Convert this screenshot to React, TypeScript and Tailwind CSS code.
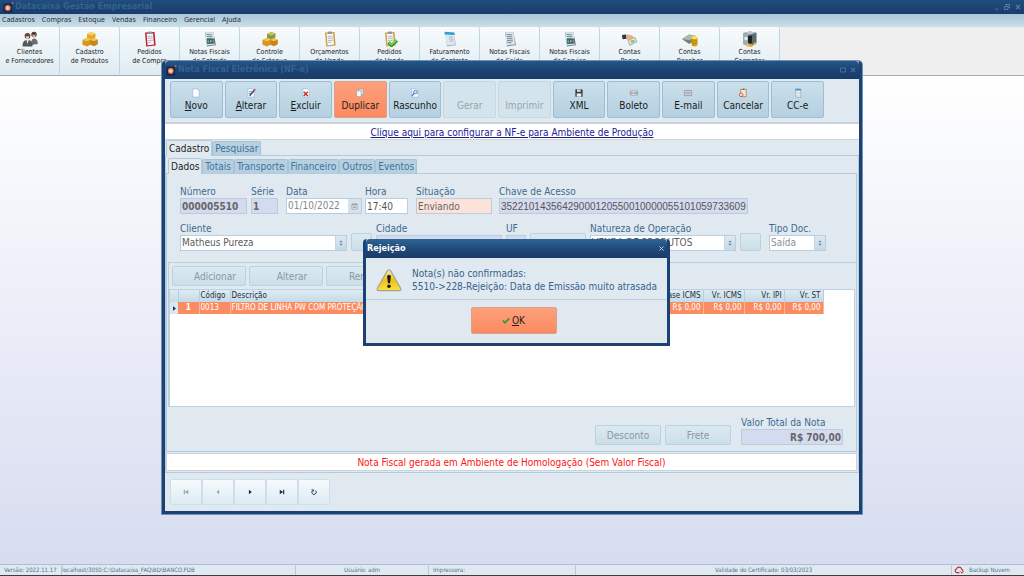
import React from "react";
import type { ReactNode } from "react";

const fontTahoma = "font-['Tahoma','DejaVu_Sans_Condensed','Noto_Sans',sans-serif]";

function AppLogo() {
  return (
    <svg viewBox="0 0 12 12" className="size-[11px] shrink-0" aria-hidden="true">
      <rect x="0.5" y="1.5" width="9.500" height="10" rx="1" fill="#17284a" />
      <circle cx="5.200" cy="6.500" r="3.100" fill="#f0824f" />
      <path d="M5.200 4.500v4M3.200 6.500h4" stroke="#fbe3d2" strokeWidth="1.200" />
      <circle cx="10.400" cy="1.400" r="1" fill="#e0703f" />
    </svg>
  );
}

function People() {
  return (
    <>
      <circle cx="12" cy="3.500" r="2.700" fill="#4a3a34" />
      <path d="M10.400 3.600c1 .5 2.400.4 3.200-.3 0 2-.6 3.200-1.600 3.200S10.400 5.500 10.400 3.600z" fill="#e8b896" />
      <path d="M9 14c0-4 .8-6.200 3-6.500 2.500 0 3.800 2 3.800 5.500z" fill="#6a6f75" />
      <circle cx="5.500" cy="5" r="2.900" fill="#5d4538" />
      <path d="M3.700 5c1.200.700 2.600.500 3.500-.200 0 2.400-.6 3.800-1.700 3.800S3.700 7.300 3.700 5z" fill="#f0c3a2" />
      <path d="M.5 15.500C.5 11 2 9 5.500 9s5 2 5 6.500z" fill="#53585e" />
      <path d="M4.500 9l1 4 1.200-4z" fill="#f5f5f5" />
    </>
  );
}

function Boxes({ green = false }: { green?: boolean }) {
  return (
    <>
      <path d="M5 3l4-2 4.500 1.500v4L9.500 8.500 5 7z" fill={green ? "#8c9a3a" : "#e3a829"} />
      <path d="M5 3l4-2 4.500 1.500L9.500 4.500z" fill={green ? "#c0c56a" : "#f8d56c"} />
      <path d="M.5 9l4-2 4.500 1.500v5l-4 2-4.500-1.700z" fill="#d9961c" />
      <path d="M.5 9l4-2L9 8.500 5 10.300z" fill="#f3c557" />
      <path d="M8.500 9l3.500-1.700L15.800 8.800v4.500L12 15.200 8.500 13.800z" fill="#c9851a" />
      <path d="M8.500 9l3.500-1.700L15.800 8.800 12 10.300z" fill="#f3c557" />
    </>
  );
}

function Clip({ tone, check = false }: { tone: "red" | "gold"; check?: boolean }) {
  return (
    <>
      <path d="M3 1.500l9.500-.5 1.200 13.500-9.500 1z" fill={tone === "red" ? "#c2202f" : "#d2a04a"} />
      <path d="M4.600 2.800l6.400-.4 1 11-6.400.8z" fill="#f7f9fb" />
      <path d="M6 .6h4v2.200H6z" fill="#8d949c" />
      <path d="M5.600 5.500l5-.3M5.800 7.500l5-.3M6 9.500l5-.3M6.200 11.500l3-.2" stroke="#9fa8b0" strokeWidth=".8" />
      {check && <path d="M6.500 11.500l3 3 5.500-5" fill="none" stroke="#2f9a1d" strokeWidth="3.200" />}
      {check && <path d="M7 11.500l2.500 2.300 5-4.500" fill="none" stroke="#8be056" strokeWidth="1.200" />}
    </>
  );
}

function Report({ chart = false, blue = false }: { chart?: boolean; blue?: boolean }) {
  return (
    <>
      <path d="M3 1l8.500.6 2.500 12.700-9 1.200z" fill={blue ? "#aeb8c0" : "#7f929e"} />
      <path d="M3.400 1l8.100.6 1.500 11.800-8.300.8z" fill="#dde7ed" />
      {blue ? (
        <>
          <path d="M2.500.8l10 .7.3 2.500-10-.4z" fill="#2f9fdc" />
          <path d="M7 6l4 .3M7.200 8l4 .3M7.400 10l4 .3" stroke="#a2adb6" strokeWidth=".8" />
        </>
      ) : (
        <path d="M4.500 3.500l5.500.4M4.700 5.500l5.600.4M5 7.500l5.600.4M5.200 9.500l5.600.4M5.400 11.500l4 .3" stroke="#6b8790" strokeWidth="1" />
      )}
      {chart && (
        <>
          <path d="M4.500 8l8-.5.5 5-8 .5z" fill="#3e6470" />
          <path d="M5.500 11.500v-2h1.500v2zM8 11.300V9h1.500v2.300z" fill="#5ed07c" />
          <path d="M10.500 11.300v-2H12v2z" fill="#e26b5b" />
        </>
      )}
    </>
  );
}

function PayHand() {
  return (
    <>
      <path d="M5 8l8-2 2.500 5-8 4z" fill="#a9bda0" />
      <path d="M6.500 9l6-1.600 1.500 3-6 2.800z" fill="#e3ecdd" />
      <path d="M8.500 10l3.500-1 .8 1.600-3.300 1.200z" fill="#8ea886" />
      <path d="M0 4l4-.5.8 4.200-4.300.6z" fill="#3a3234" />
      <path d="M4 3.800c3-.6 6 .2 8 2.400l-1 1.400-3-.5 1.800 2.200-1.300.7L4.600 7.600z" fill="#eab08a" />
    </>
  );
}

function MoneyRoll() {
  return (
    <>
      <path d="M0 8l7-4.500 7 1.500v4l-7 4z" fill="#6f8672" />
      <path d="M0 8l7-4.500 7 1.500-6.500 4.200z" fill="#a9bba6" />
      <path d="M9.500 6.500v7c0 2.500 6 2.500 6 0v-7z" fill="#d99e16" />
      <ellipse cx="12.500" cy="6.500" rx="3" ry="1.500" fill="#ffe06b" />
      <path d="M9.500 9c.5 1.500 5.500 1.500 6 0M9.500 11.500c.5 1.500 5.500 1.500 6 0" fill="none" stroke="#a8740c" strokeWidth=".7" />
    </>
  );
}

function Safe() {
  return (
    <>
      <path d="M1.500 2L8 .5l6.500 1.300v10.500L8 15.500l-6.500-2.300z" fill="#5d6a70" />
      <path d="M1.500 2L8 .5l6.500 1.300L8 3.600z" fill="#bfcace" />
      <path d="M1.500 2L8 3.600v11.900l-6.500-2.300z" fill="#9fadb3" />
      <path d="M6 4.500l4 .3v7.500l-4 .5z" fill="#1c2428" />
      <circle cx="4" cy="7.500" r="1.800" fill="#e6ecee" />
      <circle cx="5.500" cy="14" r="1.700" fill="#efbf33" />
      <circle cx="9.500" cy="14.300" r="1.500" fill="#e0a51e" />
      <circle cx="13" cy="12.800" r="1.300" fill="#efbf33" />
    </>
  );
}

type Tool = { top: string; bottom: string; icon: ReactNode };

const tools: Tool[] = [
  { top: "Clientes", bottom: "e Fornecedores", icon: <People /> },
  { top: "Cadastro", bottom: "de Produtos", icon: <Boxes /> },
  { top: "Pedidos", bottom: "de Compra", icon: <Clip tone="red" /> },
  { top: "Notas Fiscais", bottom: "de Entrada", icon: <Report chart /> },
  { top: "Controle", bottom: "de Estoque", icon: <Boxes green /> },
  { top: "Orçamentos", bottom: "de Venda", icon: <Clip tone="gold" /> },
  { top: "Pedidos", bottom: "de Venda", icon: <Clip tone="gold" check /> },
  { top: "Faturamento", bottom: "de Contrato", icon: <Report blue /> },
  { top: "Notas Fiscais", bottom: "de Saída", icon: <Report /> },
  { top: "Notas Fiscais", bottom: "de Serviço", icon: <Report chart /> },
  { top: "Contas", bottom: "Pagar", icon: <PayHand /> },
  { top: "Contas", bottom: "Receber", icon: <MoneyRoll /> },
  { top: "Contas", bottom: "Correntes", icon: <Safe /> },
];

const menu = ["Cadastros", "Compras", "Estoque", "Vendas", "Financeiro", "Gerencial", "Ajuda"];

const pageShape = <path d="M2 .8h5l2 2V10H2z" fill="#fbfdff" stroke="#8fb4de" strokeWidth=".7" />;

type Action = { name: string; key?: boolean; disabled?: boolean; active?: boolean; icon?: ReactNode };

const actions: Action[] = [
  {
    name: "Novo",
    key: true,
    icon: (
      <>
        {pageShape}
        <path d="M7 .8v2h2z" fill="#a9cdf2" />
      </>
    ),
  },
  {
    name: "Alterar",
    key: true,
    icon: (
      <>
        {pageShape}
        <path d="M3 4h4M3 6h3" stroke="#5a7fb8" strokeWidth=".8" />
        <path d="M4 8.500L9.500 2" stroke="#38446a" strokeWidth="1.600" />
        <path d="M8.700 3L10.200 1.200" stroke="#e05a3a" strokeWidth="1.800" />
      </>
    ),
  },
  {
    name: "Excluir",
    key: true,
    icon: (
      <>
        {pageShape}
        <path d="M3 4.200l4.500 4.500M7.500 4.200L3 8.700" stroke="#cc2a2a" strokeWidth="1.600" />
      </>
    ),
  },
  {
    name: "Duplicar",
    active: true,
    icon: (
      <>
        <path d="M4 1h5v6.500H4z" fill="#dfe9ee" stroke="#8aa0a8" strokeWidth=".7" />
        <path d="M1.800 3h5v6.500h-5z" fill="#f6fafb" stroke="#8aa0a8" strokeWidth=".7" />
      </>
    ),
  },
  {
    name: "Rascunho",
    icon: (
      <>
        {pageShape}
        <circle cx="6" cy="4.500" r="2" fill="#cfe6ff" stroke="#3d6cb8" strokeWidth=".9" />
        <path d="M4.500 6L2 9" stroke="#3d6cb8" strokeWidth="1.300" />
      </>
    ),
  },
  { name: "Gerar", disabled: true },
  { name: "Imprimir", disabled: true },
  {
    name: "XML",
    icon: (
      <>
        <path d="M1.500 1.500h7l1 1v7h-8z" fill="#3c4148" />
        <path d="M3.300 1.500h4v2.700h-4z" fill="#d5dbe0" />
        <path d="M3 6h5v3.500H3z" fill="#eef1f3" />
      </>
    ),
  },
  {
    name: "Boleto",
    icon: (
      <>
        <path d="M1.500 3.200h8v4.600h-8z" fill="#f2f2f2" stroke="#8b9298" strokeWidth=".8" />
        <path d="M2.800 4.500v2M4.200 4.500v2M5.800 4.500v2M7.200 4.500v2M8.400 4.500v2" stroke="#5b6268" strokeWidth=".7" />
      </>
    ),
  },
  {
    name: "E-mail",
    icon: (
      <>
        <path d="M1.500 2.800h8v5.600h-8z" fill="#d5dade" stroke="#8b9298" strokeWidth=".8" />
        <path d="M2.500 4.800h6M2.500 6.500h6" fill="none" stroke="#8f979d" strokeWidth=".8" />
      </>
    ),
  },
  {
    name: "Cancelar",
    icon: (
      <>
        <path d="M3 1.500h6v8H3z" fill="#f4ead0" stroke="#a8874a" strokeWidth=".9" />
        <path d="M5 .7h2v1.500H5z" fill="#6b6f74" />
        <circle cx="3.500" cy="7.500" r="2" fill="#f7dada" stroke="#cf4a3a" strokeWidth=".9" />
      </>
    ),
  },
  {
    name: "CC-e",
    icon: (
      <>
        <path d="M3 1.200h5.500V10H3z" fill="#f7fafc" stroke="#8c9aa5" strokeWidth=".7" />
        <path d="M2.700.9h6v1.900h-6z" fill="#3a9bd6" />
        <path d="M4 4.500h3.500M4 6.200h3.500M4 8h3.500" stroke="#a3afb8" strokeWidth=".6" />
      </>
    ),
  },
];

function Field({ id, label, className, children }: { id: string; label: string; className: string; children: ReactNode }) {
  return (
    <div className={`flex flex-col ${className}`}>
      <label htmlFor={id} className="h-3 text-[10px] leading-[12px] whitespace-nowrap text-[#3d6990]">
        {label}
      </label>
      {children}
    </div>
  );
}

const box = "h-4 w-full min-w-0 border border-[#b9cce0] px-px leading-[14px] outline-none";

function Combo({ id, value, muted = false }: { id: string; value: string; muted?: boolean }) {
  return (
    <div className="flex h-4 border border-[#b9cce0] bg-white">
      <select
        id={id}
        defaultValue={value}
        className={
          muted
            ? "min-w-0 flex-1 appearance-none bg-white pl-px text-[10px] leading-[14px] text-[#909090] outline-none"
            : "min-w-0 flex-1 appearance-none bg-white pl-px text-[10px] leading-[14px] text-[#5c5c5c] outline-none"
        }
      >
        <option>{value}</option>
      </select>
      <span className="flex w-[11px] items-center justify-center border-l border-[#c3d6e4] bg-linear-to-b from-[#dce8f0] to-[#c4d9e7]">
        <svg viewBox="0 0 5 8" className="h-[6px] w-1" aria-hidden="true">
          <path d="M2.500 .5L4.500 3H.5zM2.500 7.500L4.500 5H.5z" fill="#5b7d9f" />
        </svg>
      </span>
    </div>
  );
}

const softButton = "rounded-xs border border-[#b9d3e0] bg-linear-to-b from-[#dbe9f1] to-[#cbdfe9]";

function Tab({ name, active = false }: { name: string; active?: boolean }) {
  return (
    <button
      type="button"
      role="tab"
      aria-selected={active}
      className={
        active
          ? "-mb-px h-4 rounded-t-xs border border-b-0 border-[#b3cbdd] bg-[#e2eaf1] px-[2px] text-[10px] leading-[14px] text-[#222]"
          : "h-[14px] rounded-t-xs border border-b-0 border-[#a5c4d9] bg-[#b6d0e1] px-[2px] text-[10px] leading-[13px] text-[#44739b]"
      }
    >
      {name}
    </button>
  );
}

function RecordButton({ name, disabled = false, children }: { name: string; disabled?: boolean; children: ReactNode }) {
  return (
    <button
      type="button"
      aria-label={name}
      disabled={disabled}
      className="flex h-[26px] w-8 items-center justify-center rounded-xs border border-[#cfdfe9] bg-linear-to-b from-[#f7fafc] to-[#dcebf3]"
    >
      <svg viewBox="0 0 8 8" className={disabled ? "size-[6px] opacity-40" : "size-[6px]"} fill="#12305c" aria-hidden="true">
        {children}
      </svg>
    </button>
  );
}

function Invoice() {
  const money = ["Base ICMS", "Vr. ICMS", "Vr. IPI", "Vr. ST"];
  return (
    <section className="absolute top-[61px] left-[162px] w-[700px] rounded-t-sm border-[3px] border-t-0 border-[#1b4272] bg-[#e1e9f0] shadow-[0_0_0_1px_#7391b5]">
      <header className="flex h-[18px] items-center justify-between rounded-t-sm bg-linear-to-b from-[#24578a] via-[#1c4374] to-[#1a3b69] px-px">
        <div className="flex items-center gap-px">
          <AppLogo />
          <h2 className="text-[9px] font-bold text-[#356191]">Nota Fiscal Eletrônica (NF-e)</h2>
        </div>
        <div className="flex gap-1 pr-[2px] text-[#476d9b]">
          <button type="button" aria-label="Maximizar">
            <svg viewBox="0 0 6 6" className="size-[6px]" fill="none" stroke="currentColor"><path d="M.5 1h5v4h-5z" /></svg>
          </button>
          <button type="button" aria-label="Fechar nota">
            <svg viewBox="0 0 6 6" className="size-[6px]" fill="none" stroke="currentColor"><path d="M1 1l4 4M5 1L1 5" strokeWidth="1.200" /></svg>
          </button>
        </div>
      </header>

      <div className="border-b border-[#c3d5e2] pt-[2px] pb-1 pl-[5px]">
        <div className="flex w-[654px] gap-[2px]">
          {actions.map((a) => (
            <button
              key={a.name}
              type="button"
              disabled={a.disabled}
              className={
                a.disabled
                  ? "flex h-[37px] flex-1 basis-0 flex-col items-center justify-end rounded-xs border border-[#c2d8e4] bg-[#d3e4ed] pb-[5px] text-[10px] leading-[13px] text-[#9aa4ab]"
                  : a.active
                    ? "flex h-[37px] flex-1 basis-0 flex-col items-center justify-end rounded-xs border border-[#d5a291] bg-linear-to-b from-[#fda07c] to-[#fb8a60] pb-[5px] text-[10px] leading-[13px] text-[#222]"
                    : "flex h-[37px] flex-1 basis-0 flex-col items-center justify-end rounded-xs border border-[#9dbfd3] bg-linear-to-b from-[#cbdfeb] to-[#b4d0e0] pb-[5px] text-[10px] leading-[13px] text-[#1a1a1a]"
              }
            >
              {a.icon && (
                <svg viewBox="0 0 11 11" className="mb-px size-[10px]" aria-hidden="true">
                  {a.icon}
                </svg>
              )}
              {a.key ? (
                <span>
                  <span className="underline">{a.name.charAt(0)}</span>
                  {a.name.slice(1)}
                </span>
              ) : (
                <span>{a.name}</span>
              )}
            </button>
          ))}
        </div>
      </div>

      <div className="flex h-[17px] items-end justify-center border-y border-[#d0d3d8] bg-white">
        <a href="#producao" className="text-[10px] leading-[13px] text-[#1b1b8f] underline">
          Clique aqui para configurar a NF-e para Ambiente de Produção
        </a>
      </div>

      <div role="tablist" className="flex h-[15px] items-end pl-px">
        <Tab name="Cadastro" active />
        <Tab name="Pesquisar" />
      </div>
      <div className="border border-[#b3cbdd] pt-px pr-px">
        <div role="tablist" className="flex h-4 items-end pl-[2px]">
          <Tab name="Dados" active />
          <Tab name="Totais" />
          <Tab name="Transporte" />
          <Tab name="Financeiro" />
          <Tab name="Outros" />
          <Tab name="Eventos" />
        </div>
        <div className="border border-[#b3cbdd]">
          <div className="flex pt-3 pl-[13px]">
            <Field id="numero" label="Número" className="w-[67px]">
              <input id="numero" readOnly defaultValue="000005510" className={`${box} bg-[#d5dbef] text-[10px] font-bold text-[#666]`} />
            </Field>
            <Field id="serie" label="Série" className="ml-1 w-[27px]">
              <input id="serie" readOnly defaultValue="1" className={`${box} bg-[#d5dbef] text-[10px] font-bold text-[#666]`} />
            </Field>
            <Field id="data" label="Data" className="ml-2 w-[76px]">
              <div className="flex h-4 border border-[#b9cce0] bg-white">
                <input id="data" readOnly defaultValue="01/10/2022" className="min-w-0 flex-1 pl-px text-[10px] leading-[14px] text-[#888] outline-none" />
                <button type="button" aria-label="Abrir calendário" className="flex w-[13px] items-center justify-center bg-[#d4e3ed]">
                  <svg viewBox="0 0 8 8" className="size-[7px]" aria-hidden="true">
                    <path d="M1 1h6v6H1z" fill="#eef2f5" stroke="#8d99a5" strokeWidth=".8" />
                    <path d="M2 3.500h4M2 5.200h4M1 1.800h6" stroke="#7c8894" strokeWidth=".8" />
                  </svg>
                </button>
              </div>
            </Field>
            <Field id="hora" label="Hora" className="ml-[3px] w-[43px]">
              <input id="hora" readOnly defaultValue="17:40" className={`${box} bg-white text-[10px] text-[#555]`} />
            </Field>
            <Field id="situacao" label="Situação" className="ml-2 w-[76px]">
              <input id="situacao" readOnly defaultValue="Enviando" className={`${box} bg-[#fde2da] text-[10px] text-[#666]`} />
            </Field>
            <Field id="chave" label="Chave de Acesso" className="ml-[7px] w-[249px]">
              <input
                id="chave"
                readOnly
                defaultValue="35221014356429000120550010000055101059733609"
                className={`${box} bg-[#d5dbef] font-['Liberation_Sans',sans-serif] text-[10px] text-[#555]`}
              />
            </Field>
          </div>

          <div className="flex items-end pt-[9px] pl-[13px]">
            <Field id="cliente" label="Cliente" className="w-[167px]">
              <Combo id="cliente" value="Matheus Pureza" />
            </Field>
            <button type="button" aria-label="Buscar cliente" className={`ml-1 h-[18px] w-[21px] ${softButton}`} />
            <Field id="cidade" label="Cidade" className="ml-1 w-[126px]">
              <input id="cidade" readOnly className={`${box} bg-[#d5dbef] text-[10px]`} />
            </Field>
            <Field id="uf" label="UF" className="ml-1 w-5">
              <input id="uf" readOnly className={`${box} bg-[#d5dbef] text-[10px]`} />
            </Field>
            <button type="button" aria-label="Detalhes" className={`ml-1 h-[18px] w-[56px] ${softButton}`} />
            <Field id="natureza" label="Natureza de Operação" className="ml-1 w-[146px]">
              <Combo id="natureza" value="VENDA DE PRODUTOS" />
            </Field>
            <button type="button" aria-label="Buscar natureza" className={`ml-1 h-[18px] w-[21px] ${softButton}`} />
            <Field id="tipo" label="Tipo Doc." className="ml-2 w-[57px]">
              <Combo id="tipo" value="Saída" muted />
            </Field>
          </div>

          <div className="mt-[11px] ml-px border-t border-l border-[#b9cfdf] pt-[3px]">
            <div className="flex gap-[3px] pl-[3px]">
              {["Adicionar", "Alterar", "Remover"].map((n) => (
                <button key={n} type="button" disabled className={`h-5 w-[74px] pl-[12px] text-[10px] text-[#8c979e] ${softButton}`}>
                  {n}
                </button>
              ))}
            </div>
            <div className="mt-[3px] mr-px h-[118px] border border-[#bdd2e0] bg-white">
              <table className="table-fixed border-collapse text-[8px] leading-[12px] whitespace-nowrap">
                <colgroup>
                  <col className="w-2" />
                  <col className="w-[21px]" />
                  <col className="w-[31px]" />
                  <col className="w-[428px]" />
                  <col className="w-[45px]" />
                  <col className="w-[41px]" />
                  <col className="w-10" />
                  <col className="w-[39px]" />
                </colgroup>
                <thead>
                  <tr className="h-3 bg-linear-to-b from-[#dfebf3] to-[#c4dbe7] text-[#1f2f3f]">
                    <th className="border-r border-[#b5cfdf]" />
                    <th className="border-r border-[#b5cfdf]" />
                    <th className="border-r border-[#b5cfdf] px-px text-left font-medium">Código</th>
                    <th className="border-r border-[#b5cfdf] px-px text-left font-medium">Descrição</th>
                    {money.map((m) => (
                      <th key={m} className="border-r border-[#b5cfdf] px-[2px] text-right font-medium">{m}</th>
                    ))}
                  </tr>
                </thead>
                <tbody>
                  <tr className="h-3 bg-[#fb8c62] text-white">
                    <td className="bg-[#dbe8f0]">
                      <svg viewBox="0 0 4 6" className="mx-auto h-[5px] w-[3px]" aria-hidden="true"><path d="M0 0l4 3-4 3z" fill="#12305c" /></svg>
                    </td>
                    <td className="border-r border-[#fdb59b] text-center font-bold">1</td>
                    <td className="border-r border-[#fdb59b] px-px">0013</td>
                    <td className="border-r border-[#fdb59b] px-px">FILTRO DE LINHA PW COM PROTEÇÃO</td>
                    {money.map((m) => (
                      <td key={m} className="border-r border-[#fdb59b] px-[2px] text-right">R$ 0,00</td>
                    ))}
                  </tr>
                </tbody>
              </table>
            </div>
          </div>

          <div className="flex items-end justify-end gap-1 pt-[10px] pr-[13px] pb-[6px]">
            <button type="button" disabled className={`h-5 w-[66px] text-[10px] text-[#8c979e] ${softButton}`}>Desconto</button>
            <button type="button" disabled className={`h-5 w-[66px] text-[10px] text-[#8c979e] ${softButton}`}>Frete</button>
            <Field id="total" label="Valor Total da Nota" className="ml-[6px] w-[102px]">
              <input id="total" readOnly defaultValue="R$ 700,00" className={`${box} bg-[#d5dbef] text-right text-[10px] font-bold text-[#666]`} />
            </Field>
          </div>
        </div>
        <p className="mt-px mb-px flex h-[18px] items-center justify-center border border-[#cdd3d9] bg-white text-[10px] text-[#fb1414]">
          Nota Fiscal gerada em Ambiente de Homologação (Sem Valor Fiscal)
        </p>
      </div>

      <nav className="flex px-[5px] pt-[6px] pb-[6px]">
        <RecordButton name="Primeiro" disabled>
          <path d="M1 1h1.500v6H1zM7 1v6L2.500 4z" />
        </RecordButton>
        <RecordButton name="Anterior" disabled>
          <path d="M5.500 1v6L2 4z" />
        </RecordButton>
        <RecordButton name="Próximo">
          <path d="M2.500 1v6L6.500 4z" />
        </RecordButton>
        <RecordButton name="Último">
          <path d="M5.500 1H7v6H5.500zM1 1v6l4.500-3z" />
        </RecordButton>
        <RecordButton name="Atualizar">
          <path d="M2.300 2A2.900 2.900 0 1 0 6 2.200" fill="none" stroke="#12305c" strokeWidth="1.200" />
          <path d="M0 .7h3.600v3z" />
        </RecordButton>
      </nav>
    </section>
  );
}

function RejectionDialog() {
  return (
    <section
      role="dialog"
      aria-labelledby="dialog-title"
      className="absolute top-[239px] left-[363px] w-[307px] rounded-t-sm border-[3px] border-t-0 border-[#1b4272] bg-[#e1e9f0]"
    >
      <header className="flex h-[19px] items-center justify-between rounded-t-sm bg-linear-to-b from-[#2f6595] via-[#1f4a7a] to-[#1a3b69] pr-[3px] pl-px text-white">
        <h2 id="dialog-title" className="text-[9px] font-bold">Rejeição</h2>
        <button type="button" aria-label="Fechar">
          <svg viewBox="0 0 6 6" className="size-[5px]" fill="none" stroke="#b9cde0" strokeWidth="1.200"><path d="M.5 .5l5 5M5.500 .5l-5 5" /></svg>
        </button>
      </header>
      <div className="flex items-center gap-[10px] border-b border-[#bccfdf] px-[10px] pt-[9px] pb-[6px]">
        <svg viewBox="0 0 26 24" className="h-6 w-[26px] shrink-0" aria-hidden="true">
          <defs>
            <linearGradient id="warn" x1="0" y1="0" x2="0" y2="1">
              <stop offset="0" stopColor="#f6eaa8" />
              <stop offset=".5" stopColor="#eec01a" />
              <stop offset="1" stopColor="#f9e23c" />
            </linearGradient>
          </defs>
          <path d="M13 1.800c.9 0 1.500.6 2 1.500l9.600 17c.7 1.300.1 2.300-1.300 2.300H2.700c-1.400 0-2-1-1.300-2.300l9.600-17c.5-.9 1.100-1.500 2-1.500z" fill="url(#warn)" stroke="#a5a294" strokeWidth="1.200" />
          <path d="M11.100 8.500c0-2 3.800-2 3.800 0l-.9 6.800h-2z" fill="#1b1b1b" />
          <circle cx="13" cy="18.300" r="1.800" fill="#1b1b1b" />
        </svg>
        <p className="text-[10px] leading-[13px] text-[#33628f]">
          Nota(s) não confirmadas:
          <br />
          5510-&gt;228-Rejeição: Data de Emissão muito atrasada
        </p>
      </div>
      <div className="flex justify-center pt-[7px] pr-[6px] pb-[9px]">
        <button
          type="button"
          className="flex h-[27px] w-[86px] items-center justify-center gap-[2px] rounded-xs border border-[#d5a291] bg-linear-to-b from-[#fda07c] to-[#fb8a60] text-[10px] text-[#1d1d1d]"
        >
          <svg viewBox="0 0 8 7" className="h-[7px] w-2" aria-hidden="true">
            <path d="M.8 3.500l2.300 2.200L7.300 1.300" fill="none" stroke="#3f9a26" strokeWidth="1.800" />
          </svg>
          <span>
            <span className="underline">O</span>K
          </span>
        </button>
      </div>
    </section>
  );
}

export default function App() {
  return (
    <main className={`relative flex min-h-screen flex-col overflow-hidden ${fontTahoma}`}>
      <header className="flex h-[14px] shrink-0 items-center justify-between bg-linear-to-b from-[#1f4e7f] to-[#1a3c6b] px-[3px]">
        <div className="flex items-center gap-px">
          <AppLogo />
          <h1 className="text-[9px] font-bold text-[#356191]">Datacaixa Gestão Empresarial</h1>
        </div>
        <div className="flex items-center gap-[5px] text-[#557aa6]">
          <button type="button" aria-label="Minimizar programa">
            <svg viewBox="0 0 6 6" className="size-[5px]" stroke="currentColor"><path d="M1 5h4" /></svg>
          </button>
          <button type="button" aria-label="Restaurar programa">
            <svg viewBox="0 0 6 6" className="size-[6px]" fill="none" stroke="currentColor"><path d="M.5 2.500h3.500v3H.5zM2 2.500V.5h3.500v3H4" /></svg>
          </button>
          <button type="button" aria-label="Fechar programa">
            <svg viewBox="0 0 6 6" className="size-[6px]" fill="none" stroke="currentColor"><path d="M1 1l4 4M5 1L1 5" strokeWidth="1.200" /></svg>
          </button>
        </div>
      </header>

      <nav className="flex h-[13px] shrink-0 items-center gap-[7px] bg-linear-to-b from-[#a9c5d9] to-[#cddfe9] pl-[2px] font-['Noto_Sans',sans-serif] text-[7px] text-[#26323d]">
        {menu.map((m) => (
          <button key={m} type="button">{m}</button>
        ))}
      </nav>

      <div className="flex h-[49px] shrink-0 border-b border-[#ababab] bg-[#efefef]">
        {tools.map((t, i) => (
          <button
            key={i}
            type="button"
            className="flex w-[60px] flex-col items-center rounded-xs border-r border-[#bcd6e4] bg-linear-to-b from-[#f8fbfc] to-[#dfecf3] pt-[4px] text-[7px] leading-[9px] text-[#1c1c1c]"
          >
            <svg viewBox="0 0 16 16" className="mb-px size-4" aria-hidden="true">
              {t.icon}
            </svg>
            <span>{t.top}</span>
            <span>{t.bottom}</span>
          </button>
        ))}
      </div>

      <div className="flex-1 bg-linear-to-b from-white to-[#d7dcf0]" />

      <footer className="flex h-3 shrink-0 items-center border-t border-b border-t-[#a9bfd3] border-b-[#3c3f42] bg-[#e1e9f0] text-[6px] leading-[10px] whitespace-nowrap text-[#4d7195]">
        <span className="w-[62px] border-r border-[#b9cbda] pl-1">Versão: 2022.11.17</span>
        <span className="w-[234px] border-r border-[#b9cbda]">localhost/3050:C:\Datacaixa_FAQ\BD\BANCO.FDB</span>
        <span className="w-[133px] border-r border-[#b9cbda] text-center">Usuário: adm</span>
        <span className="w-[147px] border-r border-[#b9cbda] pl-1">Impressora:</span>
        <span className="flex-1 border-r border-[#b9cbda] text-center">Validade do Certificado: 03/03/2023</span>
        <span className="flex w-[72px] items-center gap-[5px] pl-[2px]">
          <svg viewBox="0 0 11 9" className="h-2 w-[10px]" fill="none" stroke="#cf2330" strokeWidth="1.300" aria-hidden="true">
            <path d="M6 7.500H3.200A2.200 2.200 0 0 1 2.800 3.200 2.900 2.900 0 0 1 8.300 3.300 2 2 0 0 1 9.500 6" />
            <path d="M7 6.300l2 1.700 1.500-2" strokeWidth="1.100" />
          </svg>
          Backup Nuvem
        </span>
      </footer>

      <Invoice />
      <RejectionDialog />
    </main>
  );
}
